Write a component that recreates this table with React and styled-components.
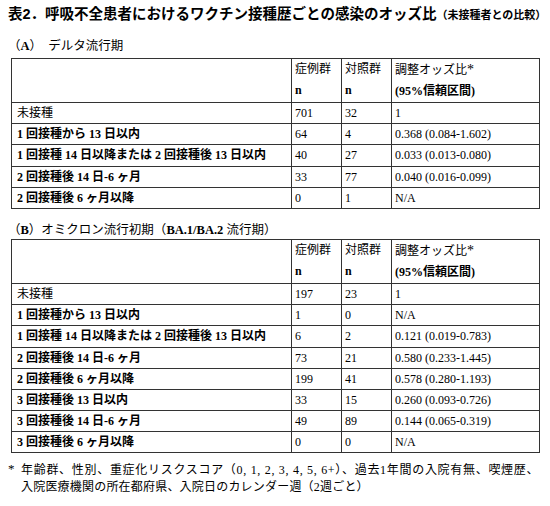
import React from 'react';
import styled, { createGlobalStyle } from 'styled-components';

const GlobalStyle = createGlobalStyle`
  body {
    margin: 0;
    background: #ffffff;
    color: #000000;
    font-family: "Liberation Serif", "Noto Sans CJK JP", serif;
  }
`;

const Page = styled.div`
  width: 550px;
  padding: 4px 8px 0 8px;
  box-sizing: border-box;
`;

const Title = styled.div`
  font-family: "Liberation Sans", "Noto Sans CJK JP", sans-serif;
  font-weight: 700;
  font-size: 14.5px;
  line-height: 20px;
  white-space: nowrap;
`;

const TitleNote = styled.span`
  font-size: 11px;
`;

const SectionLabel = styled.div`
  font-size: 12.5px;
  line-height: 18px;
  margin: 12px 0 ${props => props.$after}px 0;
  white-space: nowrap;
`;

const Letter = styled.span`
  font-weight: 700;
`;

const Table = styled.table`
  border-collapse: collapse;
  margin-left: 3px;
  width: 528px;
  table-layout: fixed;
  font-size: 12px;
`;

const Th = styled.th`
  border: 1px solid #333333;
  padding: 0 3px;
  height: 41px;
  text-align: left;
  vertical-align: top;
  font-weight: 400;
  line-height: 21px;
  white-space: nowrap;
`;

const Td = styled.td`
  border: 1px solid #333333;
  padding: 0 ${props => (props.$label ? '5px' : '3px')};
  height: 20.2px;
  line-height: 20px;
  font-weight: ${props => (props.$bold ? 700 : 400)};
  white-space: nowrap;
`;

const Bold = styled.span`
  font-weight: 700;
`;

const Star = styled.span`
  font-family: "Liberation Serif", serif;
  font-size: 14px;
`;

const Footnote = styled.div`
  margin-top: 9px;
  padding-left: 13px;
  font-size: 12px;
  line-height: 17px;
`;

const FootLine = styled.div`
  white-space: nowrap;
  letter-spacing: ${props => props.$spacing}px;
`;

const FootStar = styled.span`
  display: inline-block;
  width: 13px;
  margin-left: -13px;
  font-family: "Liberation Serif", serif;
  font-size: 13px;
  vertical-align: top;
  line-height: 14px;
`;

const deltaRows = [
  { label: '未接種', bold: false, cases: '701', controls: '32', or: '1' },
  { label: '1 回接種から 13 日以内', bold: true, cases: '64', controls: '4', or: '0.368 (0.084-1.602)' },
  { label: '1 回接種 14 日以降または 2 回接種後 13 日以内', bold: true, cases: '40', controls: '27', or: '0.033 (0.013-0.080)' },
  { label: '2 回接種後 14 日-6 ヶ月', bold: true, cases: '33', controls: '77', or: '0.040 (0.016-0.099)' },
  { label: '2 回接種後 6 ヶ月以降', bold: true, cases: '0', controls: '1', or: 'N/A' },
];

const omicronRows = [
  { label: '未接種', bold: false, cases: '197', controls: '23', or: '1' },
  { label: '1 回接種から 13 日以内', bold: true, cases: '1', controls: '0', or: 'N/A' },
  { label: '1 回接種 14 日以降または 2 回接種後 13 日以内', bold: true, cases: '6', controls: '2', or: '0.121 (0.019-0.783)' },
  { label: '2 回接種後 14 日-6 ヶ月', bold: true, cases: '73', controls: '21', or: '0.580 (0.233-1.445)' },
  { label: '2 回接種後 6 ヶ月以降', bold: true, cases: '199', controls: '41', or: '0.578 (0.280-1.193)' },
  { label: '3 回接種後 13 日以内', bold: true, cases: '33', controls: '15', or: '0.260 (0.093-0.726)' },
  { label: '3 回接種後 14 日-6 ヶ月', bold: true, cases: '49', controls: '89', or: '0.144 (0.065-0.319)' },
  { label: '3 回接種後 6 ヶ月以降', bold: true, cases: '0', controls: '0', or: 'N/A' },
];

const OddsTable = ({ rows }) => (
  <Table>
    <colgroup>
      <col style={{ width: '280px' }} />
      <col style={{ width: '50px' }} />
      <col style={{ width: '50px' }} />
      <col style={{ width: '148px' }} />
    </colgroup>
    <thead>
      <tr>
        <Th />
        <Th>症例群<br /><Bold>n</Bold></Th>
        <Th>対照群<br /><Bold>n</Bold></Th>
        <Th>調整オッズ比<Star>*</Star><br /><Bold>(95%信頼区間)</Bold></Th>
      </tr>
    </thead>
    <tbody>
      {rows.map(row => (
        <tr key={row.label}>
          <Td $label $bold={row.bold}>{row.label}</Td>
          <Td>{row.cases}</Td>
          <Td>{row.controls}</Td>
          <Td>{row.or}</Td>
        </tr>
      ))}
    </tbody>
  </Table>
);

const App = () => (
  <Page>
    <GlobalStyle />
    <Title>
      表2．呼吸不全患者におけるワクチン接種歴ごとの感染のオッズ比
      <TitleNote>（未接種者との比較）</TitleNote>
    </Title>
    <SectionLabel $after={3}>（<Letter>A</Letter>）　デルタ流行期</SectionLabel>
    <OddsTable rows={deltaRows} />
    <SectionLabel $after={0}>（<Letter>B</Letter>）オミクロン流行初期（<Letter>BA.1/BA.2</Letter> 流行期）</SectionLabel>
    <OddsTable rows={omicronRows} />
    <Footnote>
      <FootLine $spacing={0.7}>
        <FootStar>*</FootStar>年齢群、性別、重症化リスクスコア（0, 1, 2, 3, 4, 5, 6+）、過去1年間の入院有無、喫煙歴、
      </FootLine>
      <FootLine $spacing={0.2}>入院医療機関の所在都府県、入院日のカレンダー週（2週ごと）</FootLine>
    </Footnote>
  </Page>
);

export default App;
